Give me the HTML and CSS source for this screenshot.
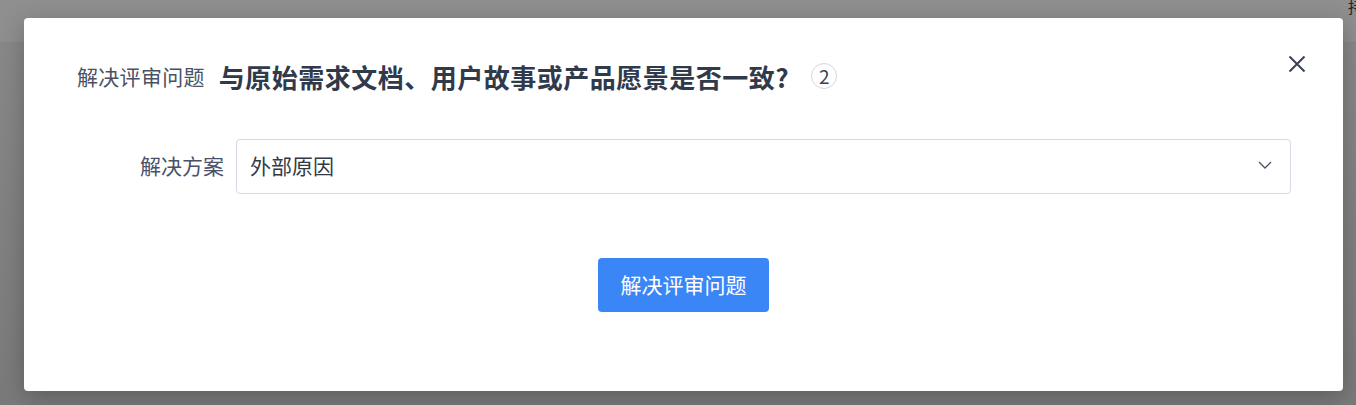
FILE: index.html
```html
<!DOCTYPE html>
<html lang="zh">
<head>
<meta charset="utf-8">
<link rel="stylesheet" href="styles.css">
</head>
<body>
<div class="page">
  <div class="topbar"><span class="topbar-text">持</span></div>
  <div class="content"></div>
</div>
<div class="modal">
  <div class="modal-header">
    <span class="modal-kicker">解决评审问题</span>
    <span class="modal-title">与原始需求文档、用户故事或产品愿景是否一致?</span>
    <span class="badge">2</span>
  </div>
  <button class="close" aria-label="关闭">
    <svg width="18" height="18" viewBox="0 0 18 18"><path d="M1.5 1.5L16.5 16.5M16.5 1.5L1.5 16.5" stroke="#3a4253" stroke-width="2" fill="none"/></svg>
  </button>
  <div class="form-row">
    <label class="form-label">解决方案</label>
    <div class="select">
      <span class="select-value">外部原因</span>
      <svg class="chevron" width="14" height="8" viewBox="0 0 14 8"><path d="M1 1L7 7L13 1" stroke="#4a5263" stroke-width="1.3" fill="none"/></svg>
    </div>
  </div>
  <div class="actions">
    <button class="primary">解决评审问题</button>
  </div>
</div>
</body>
</html>
```
FILE: styles.css
```css
* { box-sizing: border-box; }
html, body { margin: 0; padding: 0; }
body {
  width: 1356px;
  height: 405px;
  overflow: hidden;
  background: #878787;
  font-family: "Noto Sans CJK SC", "Noto Sans", sans-serif;
}
.page { height: 405px; display: flex; flex-direction: column; }
.topbar {
  height: 43px;
  background: #8f8f8f;
  border-bottom: 1px solid #858585;
  display: flex;
  justify-content: flex-end;
}
.topbar-text { font-size: 16px; color: #222; margin-right: -8px; line-height: 20px; margin-top: -4px; }
.content { flex: 1; background: linear-gradient(#888888, #7a7a7a); }
.modal {
  position: absolute;
  left: 24px;
  top: 18px;
  width: 1319px;
  height: 373px;
  background: #fff;
  border-radius: 4px;
  box-shadow: 0 6px 24px rgba(0,0,0,0.25);
  padding: 38px 52px 0 53px;
  display: flex;
  flex-direction: column;
}
.modal-header {
  height: 40px;
  display: flex;
  align-items: center;
}
.modal-kicker {
  font-size: 21px;
  color: #4a5163;
  margin-right: 14px;
  letter-spacing: 0.3px;
}
.modal-title {
  font-size: 26px;
  font-weight: 700;
  color: #313a4b;
  margin-right: 22px;
  letter-spacing: 0.5px;
}
.badge {
  width: 26px;
  height: 26px;
  border-radius: 50%;
  border: 1px solid #d3d7e3;
  font-size: 19px;
  line-height: 24px;
  text-align: center;
  color: #3a4253;
}
.close {
  position: absolute;
  right: 37px;
  top: 37px;
  width: 18px;
  height: 18px;
  padding: 0;
  border: 0;
  background: none;
  display: flex;
}
.form-row {
  margin-top: 43px;
  margin-left: 47px;
  display: flex;
  align-items: center;
  gap: 12px;
}
.form-label {
  width: 100px;
  text-align: right;
  font-size: 21px;
  color: #4a5168;
  line-height: 28px;
  margin-top: -3px;
}
.select {
  flex: 1;
  height: 55px;
  border: 1.5px solid #d6d9e6;
  border-radius: 4px;
  display: flex;
  align-items: center;
  justify-content: space-between;
  padding: 0 18px 3px 13px;
}
.select-value { font-size: 21px; color: #333a45; }
.actions {
  margin-top: 64px;
  display: flex;
  justify-content: center;
  margin-left: -1px;
}
.primary {
  width: 171px;
  height: 54px;
  border: 0;
  border-radius: 4px;
  background: #3b86f7;
  color: #fff;
  font-family: inherit;
  font-size: 21px;
  padding: 0 0 3px;
}
```
